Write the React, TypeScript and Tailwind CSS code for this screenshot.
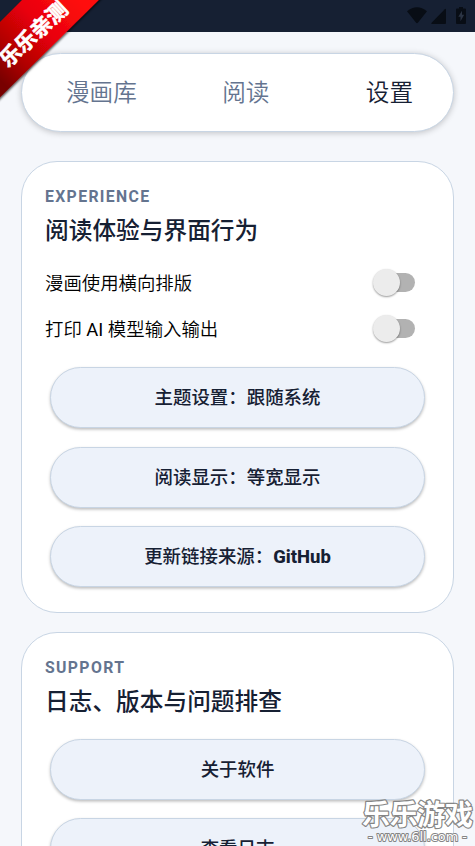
const cjk = "font-[Roboto,'Noto_Sans_CJK_SC',sans-serif]";

function StatusBar() {
    return (
        <header className="flex h-8 shrink-0 justify-end bg-[#162033]">
            <svg width="75" height="32" viewBox="0 0 75 32" fill="#080d15">
                {/* wifi */}
                <path d="M7 11.3Q17 3.3 27 11.3L17.9 22.7Q17 23.6 16.1 22.7Z" />
                {/* signal */}
                <path d="M46 9.5V23Q46 24 45 24H32Q30.5 24 31.6 22.8L44.8 9.2Q46 8.2 46 9.5Z" />
                {/* battery */}
                <path d="M59 7h4v1.5h2q1 0 1 1V23q0 1-1 1h-8q-1 0-1-1V9.500q0-1 1-1h2Z" />
                <path d="M62 10.700 58.300 16.800H60.500V21.200L64.200 14.800H62Z" fill="#2b3444" />
            </svg>
        </header>
    );
}

function Ribbon() {
    return (
        <svg className="absolute left-0 top-0 z-20" width="110" height="110" viewBox="0 0 110 110">
            <defs>
                <linearGradient id="ribbon" gradientUnits="userSpaceOnUse" x1="80" y1="0" x2="0" y2="80">
                    <stop offset="0" stopColor="#ff0a0e" />
                    <stop offset="0.4" stopColor="#e90408" />
                    <stop offset="0.75" stopColor="#b00004" />
                    <stop offset="1" stopColor="#780002" />
                </linearGradient>
                <filter id="ribbon-shadow" x="-10%" y="-10%" width="130%" height="130%">
                    <feDropShadow dx="0.8" dy="1.200" stdDeviation="0.8" floodColor="#000" floodOpacity="0.7" />
                </filter>
            </defs>
            <path d="M-20 42 42-20H119L-20 117Z" fill="url(#ribbon)" filter="url(#ribbon-shadow)" />
            <text
                transform="translate(32.500 33) rotate(-43)"
                textAnchor="middle"
                dominantBaseline="central"
                fill="#fff"
                stroke="#fff"
                strokeWidth="0.6"
                fontSize="21"
                fontWeight="700"
                fontFamily="'Noto Sans CJK SC', sans-serif"
            >
                乐乐亲测
            </text>
        </svg>
    );
}

function Watermark() {
    return (
        <svg className="absolute bottom-0 right-0 z-20" width="120" height="56" viewBox="0 0 120 56">
            <g
                fill="#fff"
                stroke="#858585"
                strokeLinejoin="round"
                paintOrder="stroke"
                textAnchor="middle"
            >
                <text x="62.500" y="34.500" fontSize="28" fontWeight="700" strokeWidth="2.400" textLength="111" fontFamily="'Noto Sans CJK SC', sans-serif">
                    乐乐游戏
                </text>
                <text x="62.500" y="51" fontSize="13" strokeWidth="2" textLength="99" lengthAdjust="spacingAndGlyphs" fontFamily="'DejaVu Sans', sans-serif">
                    - www.6ll.com -
                </text>
            </g>
        </svg>
    );
}

function SwitchRow({ label }: { label: string }) {
    return (
        <div className="flex h-[46px] items-center justify-between pr-[15px] text-[18.400px] text-black">
            {/* Roboto stays regular, the CJK face is the demi-light cut */}
            <span className="pt-px">
                {label.split(' ').map((part, i) => (
                    <span key={i} className={part === 'AI' ? 'font-normal' : 'font-[350]'}>
                        {i > 0 && ' '}
                        {part}
                    </span>
                ))}
            </span>
            <button className="mb-px flex h-[27px] w-[42px] items-center" role="switch" aria-checked="false" aria-label={label}>
                <span className="z-10 size-[27px] shrink-0 rounded-full bg-[#ececec] shadow-[0_1px_2px_rgba(0,0,0,0.4)]" />
                <span className="-ml-[22px] h-[19px] w-[37px] shrink-0 rounded-full bg-[#b2b2b2]" />
            </button>
        </div>
    );
}

function PillButton({ label, value }: { label: string; value?: string }) {
    return (
        <button className="flex h-[61px] w-full shrink-0 items-center justify-center rounded-full border-[1.500px] border-[#c8d5e4] bg-[#edf2fa] pt-[3px] text-[18.450px] font-medium text-[#162033] shadow-[0_1.5px_3px_rgba(0,0,0,0.26)]">
            {label}
            {value && <span className="font-extrabold">{value}</span>}
        </button>
    );
}

function SectionTitle({ eyebrow, title }: { eyebrow: string; title: string }) {
    return (
        <>
            <p className="text-[15.800px] leading-5 font-bold tracking-[1.350px] text-[#64748f]">{eyebrow}</p>
            <h2 className="mt-2 text-[23.700px] leading-8 font-medium text-[#162033]">{title}</h2>
        </>
    );
}

export default function App() {
    return (
        <div className={`relative flex h-[846px] w-full flex-col overflow-hidden bg-[#f5f7fb] ${cjk}`}>
            <StatusBar />

            <nav className="mx-[21px] mt-[21px] flex h-[79px] shrink-0 items-center justify-between rounded-full border-[1.500px] border-[#c8d5e4] bg-white pt-[3px] pl-11 pr-10 text-[23.600px] font-[350] text-[#64748f] shadow-[0_1px_6px_rgba(0,0,0,0.22)]">
                <span>漫画库</span>
                <span className="-ml-[11px]">阅读</span>
                <span className="text-[#162033]">设置</span>
            </nav>

            <section className="mx-[21px] mt-[29px] h-[452px] shrink-0 rounded-[36px] border-[1.500px] border-[#c8d5e4] bg-white px-[23px] pt-[25px]">
                <SectionTitle eyebrow="EXPERIENCE" title="阅读体验与界面行为" />
                <div className="mt-[13px]">
                    <SwitchRow label="漫画使用横向排版" />
                    <SwitchRow label="打印 AI 模型输入输出" />
                </div>
                <div className="mt-[15px] flex flex-col gap-[18.500px] px-[5px]">
                    <PillButton label="主题设置：跟随系统" />
                    <PillButton label="阅读显示：等宽显示" />
                    <PillButton label="更新链接来源：" value="GitHub" />
                </div>
            </section>

            <section className="mx-[21px] mt-[19px] h-[320px] shrink-0 rounded-[36px] border-[1.500px] border-[#c8d5e4] bg-white px-[23px] pt-[25px]">
                <SectionTitle eyebrow="SUPPORT" title="日志、版本与问题排查" />
                <div className="mt-[21px] flex flex-col gap-[18px] px-[5px]">
                    <PillButton label="关于软件" />
                    <PillButton label="查看日志" />
                </div>
            </section>

            <Ribbon />
            <Watermark />
        </div>
    );
}
